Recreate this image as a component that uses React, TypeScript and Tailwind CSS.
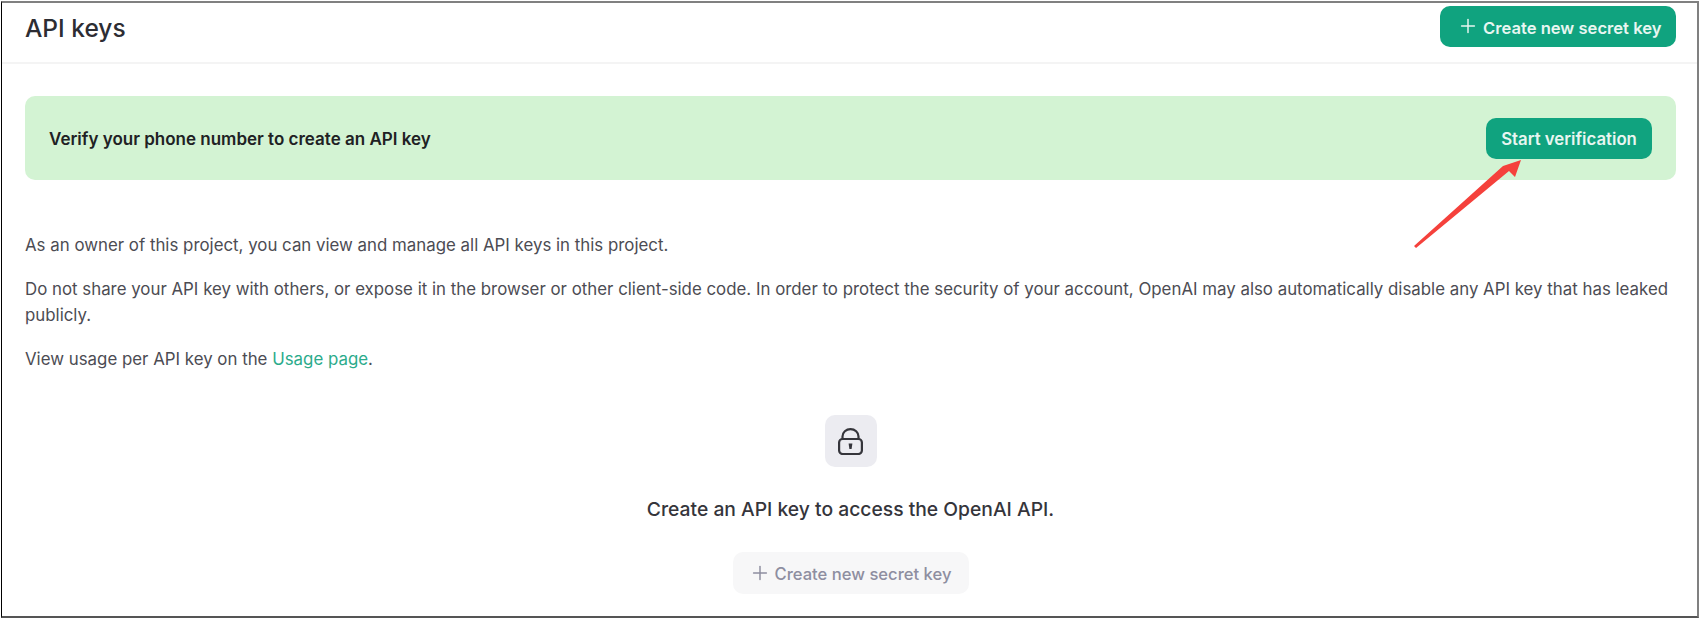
import { Plus } from 'lucide-react'

const font = { fontFamily: 'Inter, "Liberation Sans", sans-serif' }

function LockIcon() {
  return (
    <svg width="25" height="27" viewBox="0 0 25 27" fill="none" stroke="#35353b" strokeWidth="2.2">
      <rect x="1.1" y="11" width="22.8" height="15" rx="3.5" />
      <path d="M4.5 11V8.5a8 7.4 0 0 1 16 0V11" />
      <path d="M10.6 15.5h3.8l-.8 5.5h-2.2z" fill="#35353b" stroke="none" />
    </svg>
  )
}

export default function App() {
  return (
    <div className="relative h-[619px] w-[1699px] overflow-hidden bg-white" style={font}>
      <div className="mt-[1px] ml-[1px] h-[617px] w-[1698px] border-t-2 border-r-2 border-b-2 border-l border-t-[#808080] border-r-[#808080] border-b-[#555] border-l-black bg-white">
        {/* header */}
        <header className="flex h-[61px] items-start justify-between border-b-2 border-[#f4f4f4] pt-[3px] pr-[21px] pl-[23px]">
          <h1 className="mt-[6px] text-[24.5px] leading-8 font-medium text-[#2d2d33]">API keys</h1>
          <button className="flex h-[41px] w-[236px] items-center gap-[4px] rounded-[10px] bg-[#10a37f] pt-[3px] pl-[17px] text-[16.6px] font-semibold text-[#e8f6f1]">
            <Plus size={22} strokeWidth={1.6} className="-mt-[5px]" />
            Create new secret key
          </button>
        </header>

        <main className="pt-[32px] pr-[21px] pl-[23px]">
          {/* phone verification banner */}
          <div className="flex h-[84px] items-center justify-between rounded-[10px] bg-[#d3f3d3] pr-[24px] pl-[24px]">
            <span className="pt-[3px] text-[17px] font-semibold text-[#202123]">Verify your phone number to create an API key</span>
            <button className="h-[41px] w-[166px] rounded-[10px] bg-[#10a37f] pt-[3px] text-[16.8px] font-semibold text-[#e8f6f1]">
              Start verification
            </button>
          </div>

          <div className="mt-[52px] flex flex-col gap-[18px] text-[16.85px] leading-[26px] text-[#4c4c53]">
            <p>As an owner of this project, you can view and manage all API keys in this project.</p>
            <p>
              Do not share your API key with others, or expose it in the browser or other client-side code. In order to
              protect the security of your account, OpenAI may also automatically disable any API key that has leaked
              publicly.
            </p>
            <p>
              View usage per API key on the <span className="text-[#2bab8b]">Usage page</span>.
            </p>
          </div>

          {/* empty state */}
          <div className="mt-[43px] flex flex-col items-center">
            <div className="flex h-[52px] w-[52px] items-center justify-center rounded-[10px] bg-[#ececf1]">
              <LockIcon />
            </div>
            <p className="mt-[28px] text-[19.3px] leading-[28px] font-medium text-[#35353b]">
              Create an API key to access the OpenAI API.
            </p>
            <button className="mt-[29px] flex h-[42px] w-[236px] items-center gap-[4px] rounded-[10px] bg-[#f7f7f8] pt-[2px] pl-[16px] text-[16.6px] font-medium text-[#8e8ea0]">
              <Plus size={22} strokeWidth={1.6} className="-mt-[3px]" />
              Create new secret key
            </button>
          </div>
        </main>
      </div>

      {/* red annotation arrow */}
      <svg className="absolute top-[155px] left-[1410px]" width="120" height="98" viewBox="1410 155 120 98">
        <path d="M1521 160 L1515 177 L1509 171 L1416 248 L1414 246 L1503 166 Z" fill="#f5413c" />
      </svg>
    </div>
  )
}
